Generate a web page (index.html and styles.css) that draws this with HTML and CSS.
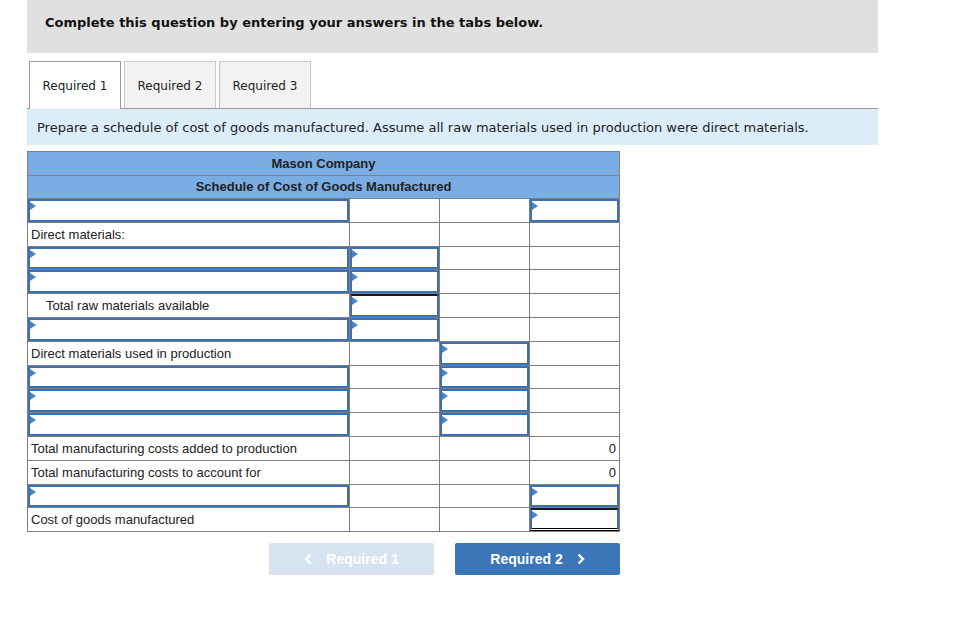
FILE: index.html
```html
<!DOCTYPE html>
<html lang="en">
  <head>
    <meta charset="UTF-8" />
    <title>Required 1</title>
    <link rel="stylesheet" href="styles.css">
  </head>
  <body>
    <div class="page">
      <div class="question-bar">Complete this question by entering your answers in the tabs below.</div>

      <div class="tabs">
        <div class="tab active">Required 1</div>
        <div class="tab">Required 2</div>
        <div class="tab">Required 3</div>
      </div>

      <div class="instructions">Prepare a schedule of cost of goods manufactured. Assume all raw materials used in production were direct materials.</div>

      <table class="schedule">
        <colgroup>
          <col class="c-label" />
          <col class="c-amt" />
          <col class="c-amt" />
          <col class="c-amt" />
        </colgroup>
        <thead>
          <tr><th colspan="4">Mason Company</th></tr>
          <tr><th colspan="4">Schedule of Cost of Goods Manufactured</th></tr>
        </thead>
        <tbody>
          <tr>
            <td><div class="entry"></div></td><td></td><td></td><td><div class="entry"></div></td>
          </tr>
          <tr>
            <td class="label">Direct materials:</td><td></td><td></td><td></td>
          </tr>
          <tr>
            <td><div class="entry"></div></td><td><div class="entry"></div></td><td></td><td></td>
          </tr>
          <tr>
            <td><div class="entry"></div></td><td><div class="entry"></div></td><td></td><td></td>
          </tr>
          <tr>
            <td class="label indent">Total raw materials available</td><td><div class="entry total"></div></td><td></td><td></td>
          </tr>
          <tr>
            <td><div class="entry"></div></td><td><div class="entry"></div></td><td></td><td></td>
          </tr>
          <tr>
            <td class="label">Direct materials used in production</td><td></td><td><div class="entry"></div></td><td></td>
          </tr>
          <tr>
            <td><div class="entry"></div></td><td></td><td><div class="entry"></div></td><td></td>
          </tr>
          <tr>
            <td><div class="entry"></div></td><td></td><td><div class="entry"></div></td><td></td>
          </tr>
          <tr>
            <td><div class="entry"></div></td><td></td><td><div class="entry"></div></td><td></td>
          </tr>
          <tr>
            <td class="label">Total manufacturing costs added to production</td><td></td><td class="sum-line"></td><td class="num">0</td>
          </tr>
          <tr>
            <td class="label">Total manufacturing costs to account for</td><td></td><td></td><td class="num sum-line">0</td>
          </tr>
          <tr>
            <td><div class="entry"></div></td><td></td><td></td><td><div class="entry"></div></td>
          </tr>
          <tr>
            <td class="label">Cost of goods manufactured</td><td></td><td></td><td class="final"><div class="entry total"></div></td>
          </tr>
        </tbody>
      </table>

      <div class="nav">
        <button class="nav-btn prev" type="button" disabled>
          <svg class="chev" width="8" height="12" viewBox="0 0 8 12"><path d="M6.5 1.5 L2 6 L6.5 10.5" /></svg>
          Required 1
        </button>
        <button class="nav-btn next" type="button">
          Required 2
          <svg class="chev" width="8" height="12" viewBox="0 0 8 12"><path d="M1.5 1.5 L6 6 L1.5 10.5" /></svg>
        </button>
      </div>
    </div>
  </body>
</html>
```

FILE: styles.css
```css
* {
  margin: 0;
  padding: 0;
  box-sizing: border-box;
}

body {
  background: #fff;
  color: #222;
  font-family: "DejaVu Sans", Verdana, sans-serif;
}

.page {
  width: 851px;
  margin-left: 27px;
}

.question-bar {
  background: #e0e0e0;
  height: 53px;
  padding: 15px 0 0 18px;
  font-size: 13px;
  font-weight: bold;
  color: #111;
}

.tabs {
  display: flex;
  gap: 3px;
  margin-top: 8px;
  padding-left: 2px;
  border-bottom: 1px solid #999;
}

.tab {
  width: 92px;
  height: 47px;
  display: flex;
  align-items: center;
  justify-content: center;
  font-size: 12px;
  color: #222;
  background: #f2f2f2;
  border: 1px solid #c8c8c8;
  border-bottom: none;
  padding-top: 1px;
}

.tab.active {
  background: #fff;
  border-color: #999;
  margin-bottom: -1px;
  height: 48px;
}

.instructions {
  background: #dbedf9;
  height: 36px;
  padding: 11px 0 0 10px;
  font-size: 13px;
  color: #222;
}

.schedule {
  margin-top: 6px;
  width: 593px;
  border-collapse: collapse;
  table-layout: fixed;
  font-family: "Liberation Sans", Arial, sans-serif;
  font-size: 13px;
}

.c-label {
  width: 321px;
}

.c-amt {
  width: 90px;
}

.schedule th {
  background: #7aade3;
  border: 1px solid #7f7f7f;
  height: 23.5px;
  font-weight: bold;
  color: #222;
  text-align: center;
  padding: 0;
}

.schedule td {
  border: 1px solid #7f7f7f;
  height: 23.8px;
  padding: 0;
  vertical-align: middle;
  position: relative;
}

.schedule td.label {
  padding-left: 3px;
  color: #222;
}

.schedule td.indent {
  padding-left: 18px;
}

.schedule td.num {
  text-align: right;
  padding-right: 3px;
}

.schedule td.sum-line {
  border-top: 1px solid #000;
}

.entry {
  position: relative;
  height: 22.8px;
  border: 2px solid #3c70b0;
  background: #fff;
}

.entry::before {
  content: '';
  position: absolute;
  top: 1px;
  left: 0;
  border-top: 4px solid transparent;
  border-bottom: 4px solid transparent;
  border-left: 6px solid #4a82c8;
}

.entry.total {
  border-top: 2px solid #0c1d33;
}

.final .entry {
  border-bottom: 3px double #000;
}

.nav {
  width: 593px;
  display: flex;
  justify-content: space-between;
  padding-left: 242px;
  margin-top: 11px;
}

.nav-btn {
  width: 165px;
  height: 32px;
  border: none;
  border-radius: 2px;
  color: #fff;
  font-family: "Liberation Sans", Arial, sans-serif;
  font-size: 14px;
  font-weight: bold;
  display: flex;
  align-items: center;
  justify-content: center;
  gap: 14px;
}

.nav-btn .chev {
  fill: none;
  stroke: #fff;
  stroke-width: 2.4;
}

.prev {
  background: #d7e3f1;
}

.next {
  background: #3a76b8;
}
```
